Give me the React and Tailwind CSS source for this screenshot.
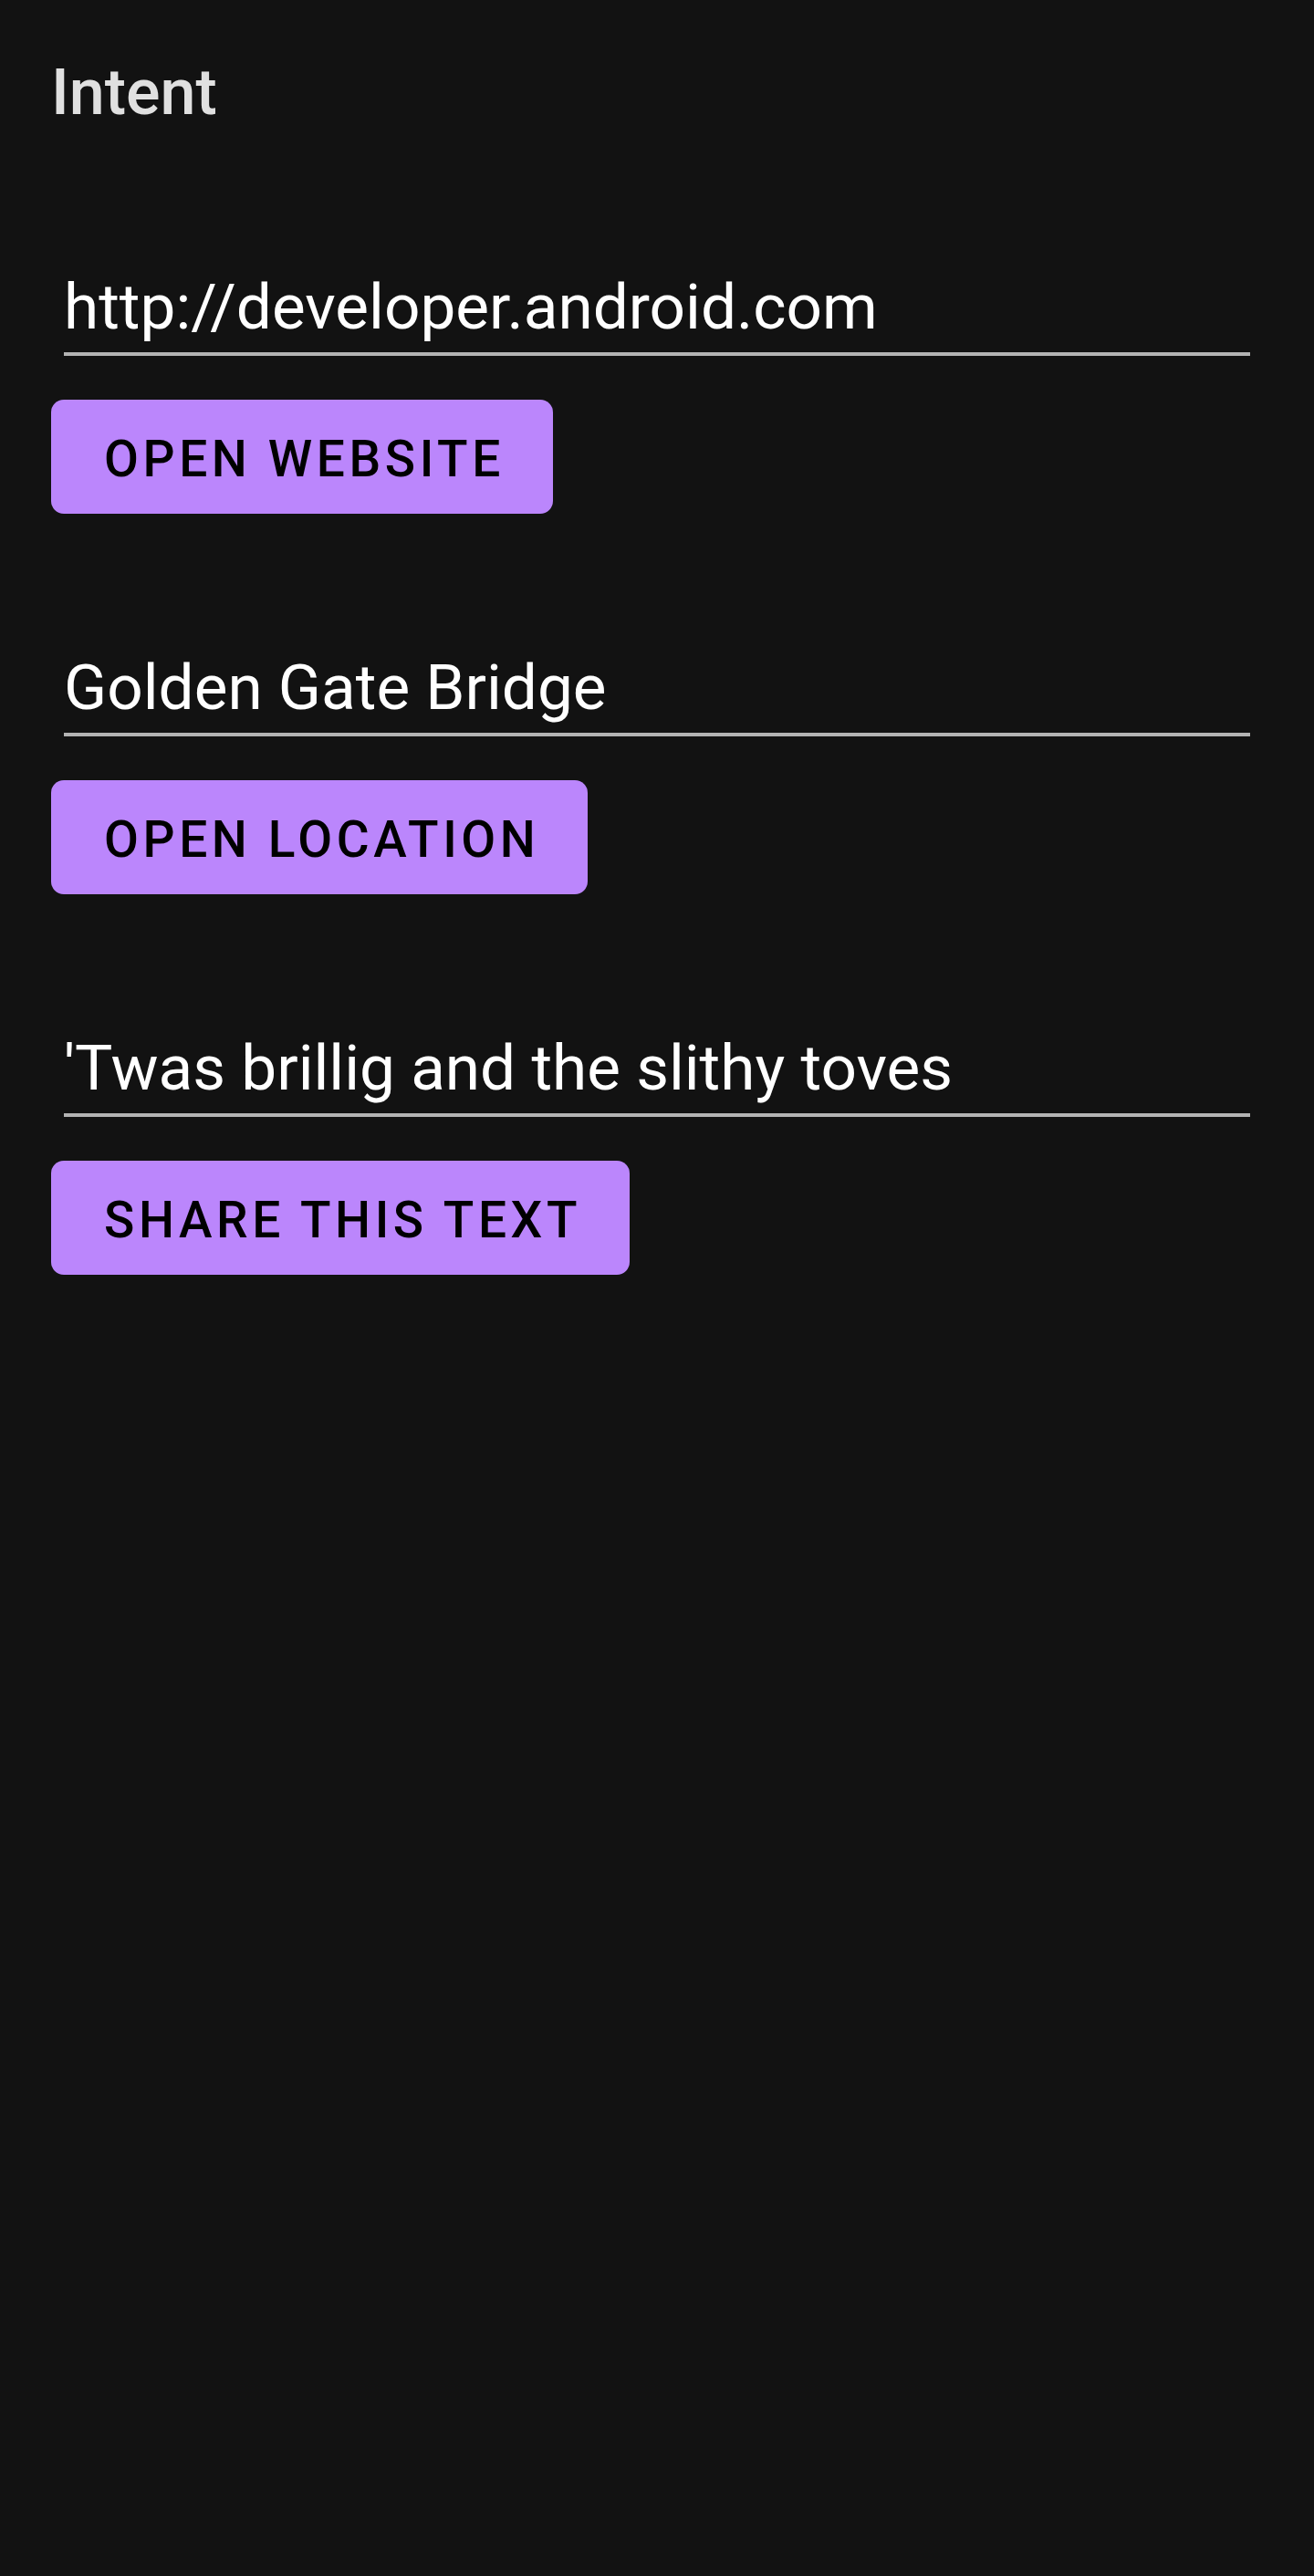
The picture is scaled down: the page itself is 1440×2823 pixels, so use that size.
export default function App() {
  const font = { fontFamily: 'Roboto, "Noto Sans", sans-serif' };
  const Field = ({ value, first }) => (
    <div className={`${first ? "mt-[154px]" : "mt-[150px]"} ml-[14px] mr-[14px]`}>
      <div className="text-[69.3px] leading-[82px] text-white whitespace-nowrap pb-[8px]">{value}</div>
      <div className="h-[3.5px] bg-[#b3b3b3]"></div>
    </div>
  );
  const Button = ({ label }) => (
    <div className="mt-[48.5px] flex">
      <div className="h-[125px] pl-[58px] pr-[53px] pt-[6px] rounded-[14px] bg-[#bb86fc] flex items-center text-black text-[55px] font-medium tracking-[4.6px] leading-none">
        {label}
      </div>
    </div>
  );
  return (
    <div className="min-h-[2823px] w-full bg-[#121212] px-[56px]" style={font}>
      <div className="pt-[60px] text-[70px] leading-[82px] font-medium text-[#e0e0e0]">Intent</div>
      <Field value="http://developer.android.com" first />
      <Button label="OPEN WEBSITE" />
      <Field value="Golden Gate Bridge" />
      <Button label="OPEN LOCATION" />
      <Field value="'Twas brillig and the slithy toves" />
      <Button label="SHARE THIS TEXT" />
    </div>
  );
}
